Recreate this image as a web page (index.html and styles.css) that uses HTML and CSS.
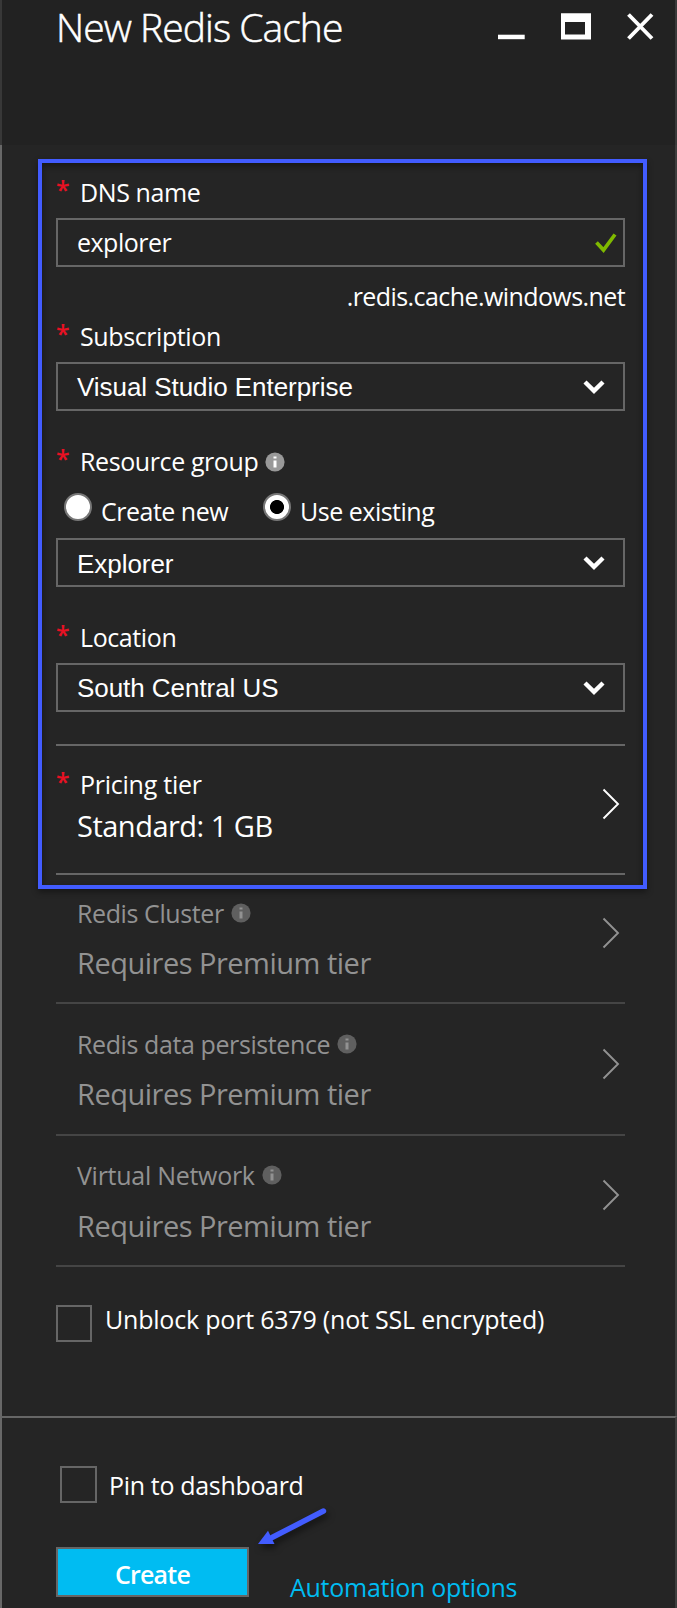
FILE: index.html
```html
<!DOCTYPE html>
<html lang="en">
<head>
<meta charset="utf-8">
<title>New Redis Cache</title>
<link rel="stylesheet" href="styles.css">
</head>
<body>
<svg class="defs" width="0" height="0">
  <symbol id="down" viewBox="0 0 22 14"><path d="M2 2 11 10.8 20 2" fill="none" stroke="#fff" stroke-width="4.4"/></symbol>
  <symbol id="next" viewBox="0 0 18 32"><path d="M1.5 1.5 16 16 1.5 30.5" fill="none" stroke="currentColor" stroke-width="1.9"/></symbol>
  <symbol id="info" viewBox="0 0 20 20"><circle cx="10" cy="10" r="9.6" fill="var(--disc)"/><path d="M8.5 4.5h3v2h-3zM8.5 8.5h3v7h-3z" fill="var(--mark)"/></symbol>
</svg>
<main class="blade">
  <header class="header">
    <h1 class="title">New Redis Cache</h1>
    <svg class="controls" width="156" height="28" viewBox="0 0 156 28">
      <path d="M0 21.700h26.700v4.500H0z" fill="#fff"/>
      <path d="M63 .3h30v26.300H63zM67 9v12.500h20V9z" fill="#fff" fill-rule="evenodd"/>
      <path d="M130.500 1.500l23.500 24M154 1.500l-23.500 24" stroke="#fff" stroke-width="3.900"/>
    </svg>
  </header>
  <form class="form">
    <section class="field">
      <label class="label"><span class="star">*</span><span>DNS name</span></label>
      <div class="box segoe"><span>explorer</span>
        <svg class="check" width="22" height="20" viewBox="0 0 22 20"><path d="M1.500 9.500 8.500 17 20 1.500" fill="none" stroke="#7fba00" stroke-width="3.700"/></svg>
      </div>
      <div class="suffix"><span>.redis.cache.windows.net</span></div>
    </section>
    <section class="field subscription">
      <label class="label"><span class="star">*</span><span>Subscription</span></label>
      <div class="box">Visual Studio Enterprise<svg width="22" height="14"><use href="#down"/></svg></div>
    </section>
    <section class="field group">
      <label class="label"><span class="star">*</span><span>Resource group</span><svg class="info" width="20" height="20"><use href="#info"/></svg></label>
      <div class="radios">
        <label class="radio"><i class="dot"></i><span>Create new</span></label>
        <label class="radio"><i class="dot on"></i><span>Use existing</span></label>
      </div>
      <div class="box"><span class="choice">Explorer</span><svg width="22" height="14"><use href="#down"/></svg></div>
    </section>
    <section class="field">
      <label class="label"><span class="star">*</span><span>Location</span></label>
      <div class="box">South Central US<svg width="22" height="14"><use href="#down"/></svg></div>
    </section>
    <section class="item pricing">
      <div class="text">
        <div class="label"><span class="star">*</span><span>Pricing tier</span></div>
        <div class="value">Standard: 1 GB</div>
      </div>
      <svg class="next" width="18" height="32"><use href="#next"/></svg>
    </section>
    <section class="item cluster">
      <div class="text">
        <div class="label"><span>Redis Cluster</span><svg class="info" width="20" height="20"><use href="#info"/></svg></div>
        <div class="value">Requires Premium tier</div>
      </div>
      <svg class="next" width="18" height="32"><use href="#next"/></svg>
    </section>
    <section class="item persistence">
      <div class="text">
        <div class="label"><span>Redis data persistence</span><svg class="info" width="20" height="20"><use href="#info"/></svg></div>
        <div class="value">Requires Premium tier</div>
      </div>
      <svg class="next" width="18" height="32"><use href="#next"/></svg>
    </section>
    <section class="item network">
      <div class="text">
        <div class="label"><span>Virtual Network</span><svg class="info" width="20" height="20"><use href="#info"/></svg></div>
        <div class="value">Requires Premium tier</div>
      </div>
      <svg class="next" width="18" height="32"><use href="#next"/></svg>
    </section>
    <label class="tick unblock"><i class="square"></i><span>Unblock port 6379 (not SSL encrypted)</span></label>
  </form>
  <footer class="footer">
    <label class="tick pin"><i class="square"></i><span>Pin to dashboard</span></label>
    <div class="actions">
      <button class="create">Create</button>
      <a class="automation">Automation options</a>
    </div>
  </footer>
  <div class="highlight"></div>
  <svg class="arrow" width="90" height="56" viewBox="0 0 90 56"><path d="M73.500 11 22 37.500" stroke="#425cff" stroke-width="5.400" stroke-linecap="round"/><path d="M8 44 18 30.800 24.500 44z" fill="#425cff"/></svg>
</main>
</body>
</html>
```

FILE: styles.css
```css
* { box-sizing: border-box; }
body { margin: 0; background: #252525; }
.defs { position: absolute; }
.blade {
  position: relative; width: 677px; height: 1608px; overflow: hidden;
  color: #fff; font: 25px/34px "Open Sans", "Noto Sans", sans-serif; white-space: nowrap;
}
.header {
  display: flex; justify-content: space-between; height: 145px;
  padding: 0 21px 0 54px; background: #222;
  border-left: 2px solid #383838; border-right: 2px solid #3a3a3a;
}
.title {
  margin: 0; font-size: 39px; line-height: 54px; font-weight: 300;
  letter-spacing: -.95px; -webkit-text-stroke: .5px #fff;
}
.controls { margin-top: 13px; }
.form {
  height: 1271px; padding: 30px 50px 0 54px;
  border-left: 2px solid #686868; border-right: 2px solid #3e3e3e;
}
.field { margin-bottom: 33px; }
.label { display: flex; align-items: center; height: 34px; letter-spacing: -.4px; }
.star { width: 24px; margin-top: -7px; color: #e81123; font-weight: 600; letter-spacing: 0; }
.box {
  display: flex; align-items: center; justify-content: space-between;
  height: 49px; margin-top: 9px; padding: 0 18px 0 19px;
  border: 2px solid #666; font: 26px/30px "Liberation Sans", Arial, sans-serif; letter-spacing: -.05px;
}
.segoe { padding: 0 6px 2px 19px; font: 25px/34px "Open Sans", sans-serif; letter-spacing: -.5px; }
.check { margin-top: 3px; }
.suffix { display: flex; justify-content: flex-end; height: 34px; margin-top: 12px; letter-spacing: -.58px; }
.subscription { margin-top: -27px; }
.group .box { margin-top: 10px; }
.choice { padding-top: 2px; }
.info { --disc: #999; --mark: #fff; margin: 1px 0 0 7px; }
.radios { display: flex; height: 34px; margin-top: 16px; padding-left: 8px; letter-spacing: -.5px; }
.radio { display: flex; }
.radio + .radio { margin-left: 35px; }
.dot {
  width: 28px; height: 28px; margin: -1px 9px 0 0; border-radius: 50%;
  background: #fff; border: 2px solid #777;
}
.dot.on { background: radial-gradient(circle, #000 6.6px, #fff 7.4px); }
.item { display: flex; justify-content: space-between; border-top: 2px solid #666; }
.item .label, .item .value { padding-left: 21px; }
.item .value { height: 40px; font-size: 29px; line-height: 40px; letter-spacing: -.5px; }
.next { margin-right: 5px; }
.pricing { height: 129px; padding-top: 21px; margin-top: -1px; }
.pricing .label { padding-left: 0; letter-spacing: -.25px; }
.pricing .value { margin-top: 5px; }
.pricing .next { margin-top: 21px; }
.cluster { height: 129px; padding-top: 21px; }
.cluster, .persistence, .network { color: #929292; }
.cluster .value, .persistence .value, .network .value { margin-top: 13px; }
.cluster .info, .persistence .info, .network .info { --disc: #5f5f5f; --mark: #929292; margin-top: 0; }
.cluster .next { margin-top: 21px; }
.persistence { height: 132px; padding-top: 23px; border-color: #454545; }
.persistence .next { margin-top: 21px; }
.network { height: 133px; padding-top: 22px; border-top-color: #454545; border-bottom: 2px solid #454545; }
.network .label { letter-spacing: -.28px; }
.network .value { margin-top: 14px; }
.network .next { margin-top: 21px; }
.tick { display: flex; }
.square { width: 36px; height: 37px; border: 2px solid #666; }
.unblock { margin-top: 38px; gap: 13px; letter-spacing: -.2px; }
.unblock span { margin-top: -3px; }
.footer {
  height: 192px; padding: 48px 50px 0 54px;
  border-top: 2px solid #666; border-left: 2px solid #686868; border-right: 2px solid #3e3e3e;
}
.pin { padding-left: 4px; gap: 12px; letter-spacing: -.33px; }
.pin .square { width: 37px; }
.pin span { margin-top: 2px; }
.actions { display: flex; margin-top: 44px; }
.create {
  width: 193px; height: 50px; padding: 4px 0 0; border: 2px solid #666;
  background: #00bcf2; color: #fff; font: 600 25px/34px "Open Sans", sans-serif; letter-spacing: -.8px;
}
.automation { margin: 23px 0 0 41px; color: #00bcf2; letter-spacing: -.27px; }
.highlight {
  position: absolute; left: 38px; top: 159px; width: 609px; height: 730px;
  border: 4px solid #425cff;
  box-shadow: 0 3px 6px rgba(0,0,0,.4), inset 0 3px 6px rgba(0,0,0,.4);
}
.arrow { position: absolute; left: 250px; top: 1500px; filter: drop-shadow(2px 4px 3px rgba(0,0,0,.5)); }
```
